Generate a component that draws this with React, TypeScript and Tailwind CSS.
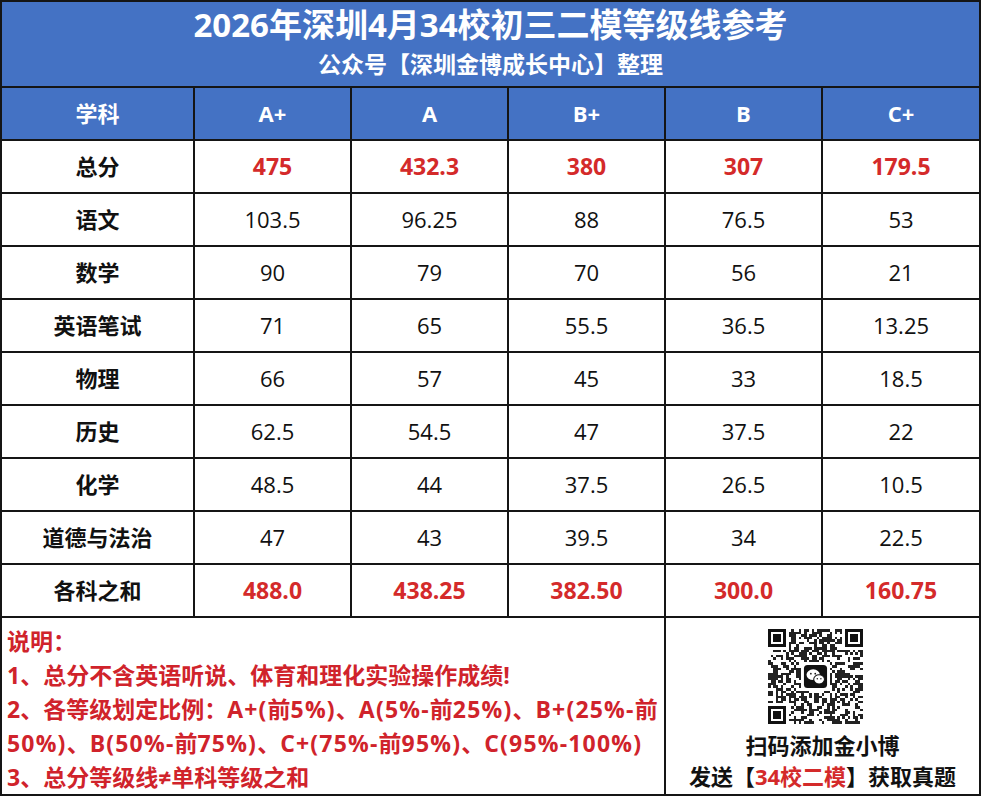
import React from 'react';

const BLUE = 'bg-[#4472c4]';
const FONT = { fontFamily: '"Open Sans", "Noto Sans CJK SC", sans-serif' };

type Row = { label: string, values: string[], red?: boolean };

const grades = ['A+', 'A', 'B+', 'B', 'C+'];

const rows: Row[] = [
  { label: '总分', values: ['475', '432.3', '380', '307', '179.5'], red: true },
  { label: '语文', values: ['103.5', '96.25', '88', '76.5', '53'] },
  { label: '数学', values: ['90', '79', '70', '56', '21'] },
  { label: '英语笔试', values: ['71', '65', '55.5', '36.5', '13.25'] },
  { label: '物理', values: ['66', '57', '45', '33', '18.5'] },
  { label: '历史', values: ['62.5', '54.5', '47', '37.5', '22'] },
  { label: '化学', values: ['48.5', '44', '37.5', '26.5', '10.5'] },
  { label: '道德与法治', values: ['47', '43', '39.5', '34', '22.5'] },
  { label: '各科之和', values: ['488.0', '438.25', '382.50', '300.0', '160.75'], red: true },
];

const gridCols = 'grid grid-cols-[193px_157px_157px_157px_157px_1fr]';

// fake qr pattern, seeded so it stays the same each render
function qrModules(size: number) {
  let seed = 20260417;
  const rand = () => {
    seed = (seed * 1103515245 + 12345) % 2147483648;
    return seed / 2147483648;
  };
  const cells: [number, number][] = [];
  const inFinder = (x: number, y: number) =>
    (x < 8 && y < 8) || (x >= size - 8 && y < 8) || (x < 8 && y >= size - 8);
  const c = Math.floor(size / 2);
  for (let y = 0; y < size; y++) {
    for (let x = 0; x < size; x++) {
      if (inFinder(x, y)) continue;
      if (Math.abs(x - c) <= 5 && Math.abs(y - c) <= 5) continue;
      if (rand() < 0.5) cells.push([x, y]);
    }
  }
  return cells;
}

function Finder({ x, y }: { x: number, y: number }) {
  return (
    <g>
      <rect x={x} y={y} width={7} height={7} fill="#111" />
      <rect x={x + 1} y={y + 1} width={5} height={5} fill="#fff" />
      <rect x={x + 2} y={y + 2} width={3} height={3} fill="#111" />
    </g>
  );
}

function QrCode() {
  const size = 37;
  const cells = qrModules(size);
  const c = size / 2;
  return (
    <svg width="95" height="95" viewBox={`0 0 ${size} ${size}`} shapeRendering="crispEdges">
      <rect width={size} height={size} fill="#fff" />
      {cells.map(([x, y]) => (
        <rect key={`${x}-${y}`} x={x} y={y} width={1} height={1} fill="#222" />
      ))}
      <Finder x={0} y={0} />
      <Finder x={size - 7} y={0} />
      <Finder x={0} y={size - 7} />
      <g shapeRendering="auto">
        <rect x={c - 4.5} y={c - 4.5} width={9} height={9} rx={1.4} fill="#111" />
        <ellipse cx={c - 0.9} cy={c - 0.7} rx={2.6} ry={2.1} fill="#fff" />
        <ellipse cx={c + 1.4} cy={c + 1.1} rx={2.1} ry={1.8} fill="#fff" stroke="#111" strokeWidth={0.4} />
        <circle cx={c - 1.8} cy={c - 1.1} r={0.33} fill="#111" />
        <circle cx={c - 0.1} cy={c - 1.1} r={0.33} fill="#111" />
        <circle cx={c + 0.7} cy={c + 0.9} r={0.28} fill="#111" />
        <circle cx={c + 2.1} cy={c + 0.9} r={0.28} fill="#111" />
      </g>
    </svg>
  );
}

// latin bits in the notes run a little wider than Open Sans
function L({ children }: { children: React.ReactNode }) {
  return <span className="tracking-[1.2px]">{children}</span>;
}

export default function App() {
  return (
    <div
      className="w-[981px] h-[796px] bg-white border-2 border-[#151515] flex flex-col overflow-hidden"
      style={FONT}
    >
      <div className={`${BLUE} h-[86px] border-b-2 border-[#151515] flex flex-col items-center justify-center text-white font-bold`}>
        <div className="text-[33px] leading-[40px] -mt-[4px]">2026年深圳4月34校初三二模等级线参考</div>
        <div className="text-[23px] leading-[30px] mt-[4px]">公众号【深圳金博成长中心】整理</div>
      </div>

      <div className={`${gridCols} ${BLUE} h-[53px] border-b-2 border-[#151515] text-white font-bold text-[22px]`}>
        <div className="flex items-center justify-center border-r-2 border-[#151515]">学科</div>
        {grades.map((g, i) => (
          <div
            key={g}
            className={`flex items-center justify-center ${i < 4 ? 'border-r-2 border-[#151515]' : ''}`}
          >
            {g}
          </div>
        ))}
      </div>

      {rows.map(row => (
        <div key={row.label} className={`${gridCols} h-[53px] border-b-2 border-[#151515] text-[22px]`}>
          <div className="flex items-center justify-center border-r-2 border-[#151515] font-bold text-[#111]">
            {row.label}
          </div>
          {row.values.map((v, i) => (
            <div
              key={i}
              className={`flex items-center justify-center ${i < 4 ? 'border-r-2 border-[#151515]' : ''} ${row.red ? 'text-[#d42a2a] font-bold text-[23px]' : 'text-[#111]'}`}
            >
              {v}
            </div>
          ))}
        </div>
      ))}

      <div className="flex flex-1">
        <div className="w-[664px] border-r-2 border-[#151515] pl-[5px] pt-[6px] text-[#d0232b] font-bold text-[23px] leading-[34px] whitespace-nowrap">
          <div>说明：</div>
          <div>1、总分不含英语听说、体育和理化实验操作成绩!</div>
          <div>
            2、各等级划定比例：<L>A+(</L>前<L>5%)</L>、<L>A(5%-</L>前<L>25%)</L>、<L>B+(25%-</L>前
          </div>
          <div>
            <L>50%)</L>、<L>B(50%-</L>前<L>75%)</L>、<L>C+(75%-</L>前<L>95%)</L>、<L>C(95%-100%)</L>
          </div>
          <div>3、总分等级线≠单科等级之和</div>
        </div>
        <div className="flex-1 flex flex-col items-center pt-[11px] font-bold text-[#111]">
          <div className="-ml-[14px]">
            <QrCode />
          </div>
          <div className="text-[22px] leading-[30px] mt-[6px]">扫码添加金小博</div>
          <div className="text-[22px] leading-[30px] mt-[1px]">
            发送【<span className="text-[#d42a2a]">34校二模</span>】获取真题
          </div>
        </div>
      </div>
    </div>
  );
}
